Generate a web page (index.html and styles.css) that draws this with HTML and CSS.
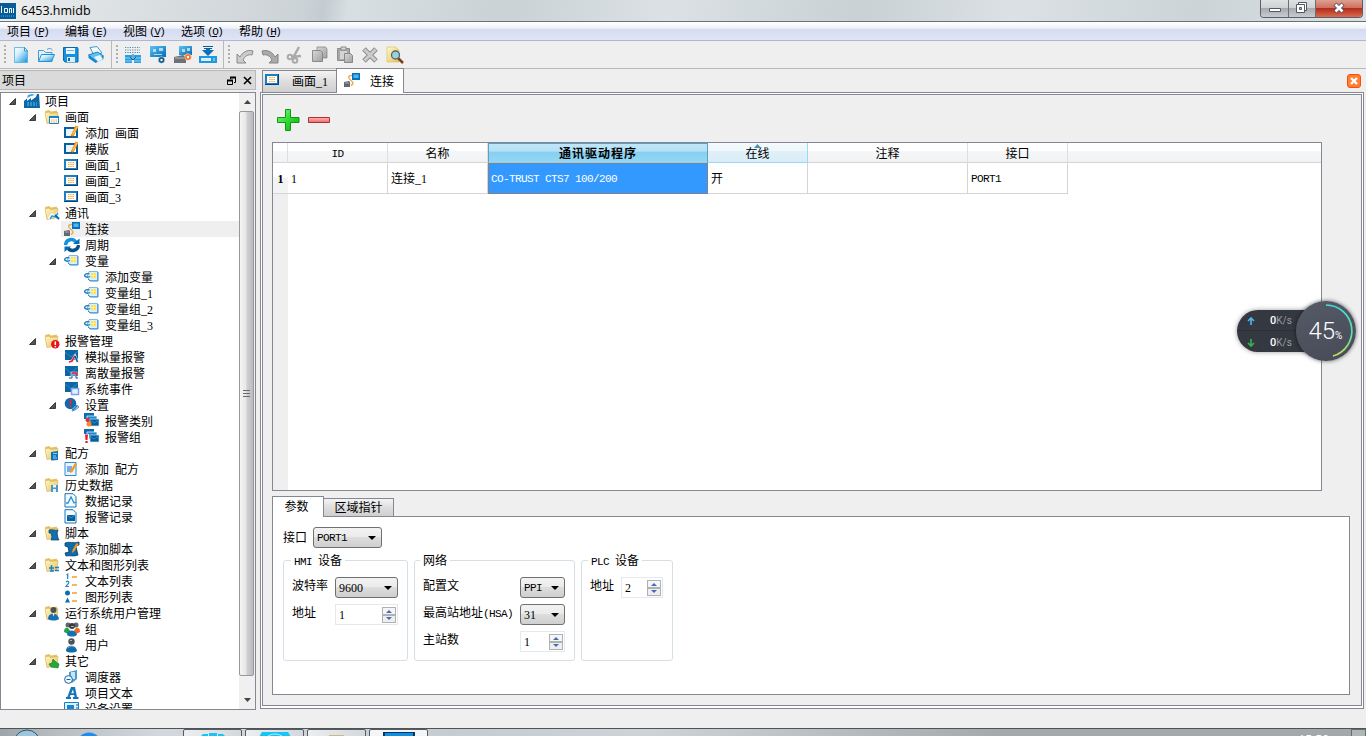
FILE: index.html
```html
<!DOCTYPE html>
<html lang="zh-CN">
<head>
  <meta charset="UTF-8" />
  <meta name="viewport" content="width=device-width, initial-scale=1" />
  <title>6453.hmidb</title>
  <link rel="stylesheet" href="styles.css">
</head>
<body>

  <!-- icon sprite -->
  <svg width="0" height="0" class="sprite">
    <defs>
      <linearGradient id="gBlue" x1="0" y1="0" x2="1" y2="1"><stop offset="0" stop-color="#5cc3f5"/><stop offset="1" stop-color="#0869b0"/></linearGradient>
      <linearGradient id="gPage" x1="0" y1="0" x2="1" y2="1"><stop offset="0" stop-color="#fff"/><stop offset=".35" stop-color="#d5effc"/><stop offset="1" stop-color="#1592dc"/></linearGradient>
      <linearGradient id="gGray" x1="0" y1="0" x2="1" y2="1"><stop offset="0" stop-color="#d8d8d8"/><stop offset="1" stop-color="#a0a0a0"/></linearGradient>
      <linearGradient id="gFold" x1="0" y1="0" x2="1" y2="1"><stop offset="0" stop-color="#fff8c8"/><stop offset="1" stop-color="#e8c158"/></linearGradient>
      <linearGradient id="gGreen" x1="0" y1="0" x2="1" y2="1"><stop offset="0" stop-color="#8cf58c"/><stop offset=".5" stop-color="#2edc2e"/><stop offset="1" stop-color="#00b400"/></linearGradient>
      <linearGradient id="gRed" x1="0" y1="0" x2="0" y2="1"><stop offset="0" stop-color="#ffb4b4"/><stop offset="1" stop-color="#f06a6a"/></linearGradient>
      <linearGradient id="gRing" x1="0" y1="0" x2="0" y2="1"><stop offset="0" stop-color="#3fe0dc"/><stop offset=".6" stop-color="#5fe0a4"/><stop offset="1" stop-color="#c8dc50"/></linearGradient>
    </defs>
    <symbol id="arrow" viewBox="0 0 7 7"><path d="M6.500 .5v6h-6z" fill="#555" stroke="#222" stroke-width=".8"/></symbol>
    <symbol id="factory" viewBox="0 0 16 16"><path d="M0 15V8l3-2.500V8l4-3v2.500L12 4l1-3h2l1 14z" fill="#0b67a5"/><path d="M3 5l1-3 4-1 3 1-4 1z" fill="#3aa3df"/><path d="M3 10h10M3 12h10" stroke="#5ec4f5" stroke-dasharray="2 1"/></symbol>
    <symbol id="folder" viewBox="0 0 16 16"><path d="M1 2l4-1 2 1.500 6-1v11L3 14z" fill="#e9c45e"/><path d="M1 4l4-1 1.500 1.500L14 3.500l-1 9.500-10 1.500z" fill="url(#gFold)" stroke="#c9a548" stroke-width=".5"/></symbol>
    <symbol id="f-screen" viewBox="0 0 16 16"><use href="#folder"/><path d="M5.500 7.500h9v7h-9z" fill="#fff" stroke="#1384cd"/><path d="M5 8h10" stroke="#1384cd" stroke-width="2"/><path d="M7 11h6M7 13h6" stroke="#f5a52e" stroke-dasharray="1.500 .8"/></symbol>
    <symbol id="f-comm" viewBox="0 0 16 16"><use href="#folder"/><path d="M5 14l3-4 3 2 3-4" stroke="#fff" stroke-width="3" fill="none"/><path d="M6 14l2-3 3 1 3-4" stroke="#2c9ee0" stroke-width="1.500" fill="none"/><path d="M11 10l4 4" stroke="#0867a8" stroke-width="2"/></symbol>
    <symbol id="f-alarm" viewBox="0 0 16 16"><use href="#folder"/><circle cx="11.300" cy="11.300" r="4.200" fill="#e8141c"/><path d="M11.300 8.500v3.500M11.300 13v1.200" stroke="#fff" stroke-width="1.500"/></symbol>
    <symbol id="f-recipe" viewBox="0 0 16 16"><use href="#folder"/><path d="M7 7l7-1v9l-7 .5z" fill="#1170b8"/><path d="M9 8.500h4M9 11h3M9 13h4" stroke="#8fd3fb"/></symbol>
    <symbol id="f-history" viewBox="0 0 16 16"><use href="#folder"/><path d="M7 8h7v7H7z" fill="#4e96c9"/><path d="M9 8h3v2.500H9zM9 12h3v3H9z" fill="#e8f4fb"/></symbol>
    <symbol id="f-script" viewBox="0 0 16 16"><use href="#folder"/><path d="M5 5c4-1 6 1 9 0l-1 3 1 5 1 2H7l1-3-1-4H5z" fill="#0f70b3" stroke="#073f6b" stroke-width=".7"/></symbol>
    <symbol id="f-list" viewBox="0 0 16 16"><use href="#folder"/><path d="M5 11h5M7.500 8v6M6 14h4M11 10.500h4M11 13.500h4" stroke="#1380cb" stroke-width="1.400" fill="none"/></symbol>
    <symbol id="f-user" viewBox="0 0 16 16"><use href="#folder"/><circle cx="9.500" cy="5" r="3" fill="#4b5157"/><path d="M4 14c0-7 10-7 11 0-3 2-8 2-11 0z" fill="#1272b3"/><path d="M8.500 8.500l1 3 1-3" fill="#fff"/></symbol>
    <symbol id="f-other" viewBox="0 0 16 16"><use href="#folder"/><path d="M5 11l3-1 1-4 3 3 3 2-1 4-7-1z" fill="#27a63a" stroke="#0c7620" stroke-width=".6"/></symbol>
    <symbol id="edit" viewBox="0 0 16 16"><path d="M1 3h12v9H1z" fill="#fff" stroke="#075f9d" stroke-width="2"/><path d="M2 4h9v7H2z" fill="#e8f4fc"/><path d="M6.500 12.500L7 10l4.500-9.500 3 1L10 10.500z" fill="#f79a1f"/><path d="M9 9l4-7" stroke="#ffcb66"/><path d="M6.500 12.500L7 10.500l1.500 1z" fill="#333"/></symbol>
    <symbol id="screen" viewBox="0 0 16 16"><path d="M1 3h12v9H1z" fill="#fff" stroke="#1b7dc2" stroke-width="2"/><path d="M13.500 2v10.500H0" stroke="#04447c" fill="none"/><path d="M4 5.500h6M4 7.500h6M4 9.500h6" stroke="#f6ae48" stroke-width="1.200" stroke-dasharray="1.600 .6"/></symbol>
    <symbol id="link" viewBox="0 0 16 16"><path d="M8 1h8v7H8z" fill="#0b70bb"/><path d="M9.500 2.500h5v3.500h-5z" fill="#49b8f5"/><path d="M8 3.500C4 3 4 6 6 7.500s5 4 1 6" stroke="#efa954" stroke-width="1.400" fill="none"/><path d="M0 10l5-1 1 1v5H0z" fill="#606970"/><path d="M1 11h4" stroke="#a9b0b5"/></symbol>
    <symbol id="cycle" viewBox="0 0 16 16"><path d="M1.500 8C2 2 9 1 12 5" stroke="#1193de" stroke-width="3.400" fill="none"/><path d="M14.500 8c-.5 6-8 7-10.500 3" stroke="#07508d" stroke-width="3.400" fill="none"/><path d="M9 7h6.500V1.500zM7 9.500H.5V15z" fill="#0a6cb4"/></symbol>
    <symbol id="tag" viewBox="0 0 16 16"><path d="M5 2.500h8.500v9H6L3 8z" fill="#d9effc" stroke="#7dbbe4"/><path d="M14 3v9H6L4 10" stroke="#3f8cc4" fill="none"/><path d="M7 4h5v5H7z" fill="#ffe14a"/><path d="M7 6.500h5M9.500 4v5" stroke="#fff8d0" stroke-width=".6"/><path d="M6 7.500C3 9 0 7.500 .8 6S4 4.500 5.500 5" stroke="#0b72b4" stroke-width="1.300" fill="none"/></symbol>
    <symbol id="alarm-base" viewBox="0 0 16 16"><path d="M1 1h13v10H9v2H7v-2H1z" fill="#0c65a5"/><path d="M1 3l6 5 7-6" stroke="#2f86c0" fill="none"/></symbol>
    <symbol id="alarm-a" viewBox="0 0 16 16"><use href="#alarm-base"/><path d="M5 14l3-2 3-5 2.500 6" stroke="#e3f0f9" stroke-width="2.500" fill="none"/><path d="M5 13l3-1 3-5" stroke="#e82230" stroke-width="1.600" fill="none"/><path d="M11 7l2.500 6" stroke="#07508d" stroke-width="1.500"/></symbol>
    <symbol id="alarm-d" viewBox="0 0 16 16"><use href="#alarm-base"/><path d="M5 13h3V8h4v5h2" stroke="#e3f0f9" stroke-width="2.600" fill="none"/><path d="M5 13h3V8h4v5h2" stroke="#1568a6" fill="none"/><path d="M7.500 8h5v3" stroke="#ea2734" stroke-width="1.500" fill="none"/></symbol>
    <symbol id="alarm-s" viewBox="0 0 16 16"><use href="#alarm-base"/><path d="M7.500 7.500h7v6h-7z" fill="#e6f1ff" stroke="#7f9ff0" stroke-width="1.500"/></symbol>
    <symbol id="alarm-set" viewBox="0 0 16 16"><circle cx="6.500" cy="6.500" r="5.800" fill="#0d6cb0"/><path d="M6.500 2v5M6.500 8v2" stroke="#f02231" stroke-width="2"/><path d="M8 14l1-3 4-3 2 2-4 3z" fill="#cfe5f4" stroke="#5390bb"/><path d="M9 13l4-4" stroke="#2784c2" stroke-width="1.500"/></symbol>
    <symbol id="alarm-stack" viewBox="0 0 16 16"><path d="M0 0h10v6H0z" fill="#0c6cb0"/><path d="M3 3h10v7H3z" fill="#2389ca" stroke="#fff" stroke-width=".7"/><path d="M6 6h9v7H6z" fill="#075c9a" stroke="#cae7f8" stroke-width=".7"/><path d="M6 7l4 3 5-3" stroke="#2f86c0" fill="none"/></symbol>
    <symbol id="alarm-class" viewBox="0 0 16 16"><use href="#alarm-stack"/><circle cx="3.500" cy="7" r="2" fill="#e92733"/><circle cx="5" cy="11" r="2.500" fill="#ff8525"/></symbol>
    <symbol id="alarm-group" viewBox="0 0 16 16"><use href="#alarm-stack"/><path d="M0 5h5v10H0z" fill="#fff"/><path d="M1 5.500h3l-.5 5.500h-2zM1.300 12h2.400v2H1.300z" fill="#ee202d"/></symbol>
    <symbol id="recipe" viewBox="0 0 16 16"><path d="M1 1.500h11v13H1z" fill="#e9f5fd" stroke="#2e8dcc"/><path d="M3 5h5v6H3z" fill="#7fa9e8"/><path d="M6 12l.5-2.500L11 2l2 1-4.500 8z" fill="#f79a1f"/></symbol>
    <symbol id="datalog" viewBox="0 0 16 16"><path d="M1 .7h8l3 3V14H1z" fill="#f2fafe" stroke="#1875b8"/><path d="M2 10h2l3-6 3 6 2-1" stroke="#258ed0" stroke-width="1.300" fill="none"/></symbol>
    <symbol id="alarmlog" viewBox="0 0 16 16"><path d="M1 .7h8l3 3V14H1z" fill="#f2fafe" stroke="#1875b8"/><path d="M3 6h8v6H3z" fill="#0b5e9c"/><path d="M3 6l4 3 4-3" stroke="#3a97cf" fill="none"/></symbol>
    <symbol id="script" viewBox="0 0 16 16"><path d="M1 2c5-2 8 1 14-1v3l-3 1 1 5 1 4c-4 2-8 0-12 1l-1-3 4-1-1-5-3-1z" fill="#0d6cad" stroke="#073b62" stroke-width=".8"/><path d="M8 12l.5-3 4-7 2 1-4 7z" fill="#f79a1f"/></symbol>
    <symbol id="textlist" viewBox="0 0 16 16"><path d="M2.500 2l1.200-.8V6M2 9c2-2 4 0 2 2l-2 2.500h3" stroke="#2385c9" stroke-width="1.200" fill="none"/><path d="M8 4h5M8 12h5" stroke="#f79a2e" stroke-width="1.700"/></symbol>
    <symbol id="graphlist" viewBox="0 0 16 16"><circle cx="3.500" cy="4" r="2.500" fill="#0e6eb2"/><path d="M3.500 8.500L6 13.500H1z" fill="#0e6eb2"/><path d="M8 4h5M8 12h5" stroke="#f79a2e" stroke-width="1.700"/></symbol>
    <symbol id="group" viewBox="0 0 16 16"><path d="M0 11c0-6 5-5 6-1v4z" fill="#25a14b"/><path d="M16 11c0-6-5-5-6-1v4z" fill="#f26a21"/><circle cx="4" cy="4" r="2.500" fill="#60666c"/><circle cx="12" cy="4" r="2.500" fill="#60666c"/><circle cx="8" cy="5" r="3" fill="#383d42"/><path d="M3 14c0-6 9-6 10 0-3 2-7 2-10 0z" fill="#1272b3"/><path d="M7 5.500h3" stroke="#aab0b6"/></symbol>
    <symbol id="user" viewBox="0 0 16 16"><circle cx="7.500" cy="4.500" r="3.200" fill="#4c5258"/><path d="M6 3.500h2" stroke="#aaa"/><path d="M2 14c0-7 10-7 11 0-3 2-8 2-11 0z" fill="#1069a9"/><path d="M4 11c2-2 5-2 6-1" stroke="#5bb4e6" fill="none"/></symbol>
    <symbol id="scheduler" viewBox="0 0 16 16"><path d="M5 3l8-2v9l-5 4-3-3z" fill="#4a9bd0"/><path d="M7 3h4v7H7z" fill="#c6e6f8"/><circle cx="4.500" cy="10.500" r="3.900" fill="#eff9ff" stroke="#1d6396"/><path d="M2.500 10.500h4" stroke="#1d6396" fill="none"/></symbol>
    <symbol id="lettera" viewBox="0 0 16 16"><path d="M7 2h4l2 10h1.500v2H9v-2h1.500l-.4-2H6.500l-.8 2H7v2H2v-2h1.300zM9 4.500L7.300 8.300h2.500z" fill="#1476b9" fill-rule="evenodd"/></symbol>
    <symbol id="device" viewBox="0 0 16 16"><path d="M.5 1.500h14v12H.5z" fill="#e1f3fe" stroke="#1282cb"/><path d="M3 4h7v6H3z" fill="#1488d4"/><path d="M12 4h2M12 7h2" stroke="#0c5f9d"/></symbol>

    <symbol id="t-new" viewBox="0 0 18 18"><path d="M2.500 1.500h10l3 3.500v11.500h-13z" fill="url(#gPage)" stroke="#4aaee6" stroke-width=".8"/><path d="M12.500 1.500V5h3z" fill="#fff" stroke="#1983c8" stroke-width=".8"/></symbol>
    <symbol id="t-open" viewBox="0 0 18 18"><path d="M1.500 15.500v-11h5l2 2h6.500v9z" fill="#dff2fc" stroke="#3f9ed4"/><path d="M1.500 15.500l3-7h13l-3 7z" fill="url(#gPage)" stroke="#248fce"/><path d="M10 3.500c3-2 5-1 5 1" stroke="#3f9ed4" fill="none"/></symbol>
    <symbol id="t-save" viewBox="0 0 18 18"><path d="M1.500 1.500h14l.5 1v13.500H3l-1.500-1.500z" fill="#1792dc" stroke="#0b68a9"/><path d="M4 2h9v6H4z" fill="#eaf7fe"/><path d="M5 11h8v5H5z" fill="#dcedf7"/><path d="M6 12h2v3H6z" fill="#086db2"/><path d="M5 4.500h7" stroke="#70b8e4"/></symbol>
    <symbol id="t-print" viewBox="0 0 18 18"><path d="M3 1.500l7-1L15 7l-8 2z" fill="#f3fbff" stroke="#3b9ad1"/><path d="M1.500 9l9-3 6 4-8 5z" fill="#67bdf0" stroke="#1682c5"/><path d="M1.500 9v3l7 5 8-4v-3l-8 4z" fill="#1389d1"/><path d="M7 11l6-2 3 4-5 3z" fill="#e5f5fd"/></symbol>
    <symbol id="t-compile" viewBox="0 0 18 18"><path d="M1 1.500h15M1 4h15M1 6.500h15" stroke="#4b8aad" stroke-dasharray="1.200 1.200"/><path d="M1 9h7v8H1zM10 9h7v8h-7z" fill="#2a9ee2"/><path d="M1 12h7M10 12h7M1 15h7M10 15h7" stroke="#a8ddf9" stroke-width=".8"/><path d="M9 8v6M6 11l3 3 3-3" stroke="#0b659f" fill="none"/></symbol>
    <symbol id="t-run" viewBox="0 0 18 18"><path d="M1 0h16v11H1z" fill="url(#gBlue)"/><path d="M4 3h3v3H4zM10 2h4v3h-4z" fill="#c9ebfd" opacity=".8"/><path d="M5 8.500h8" stroke="#a5dbf8"/><circle cx="12.500" cy="14" r="3.300" fill="#0a5689" stroke="#dbeaf4" stroke-width=".6"/><circle cx="12.500" cy="14" r="1.200" fill="#fff"/></symbol>
    <symbol id="t-sim" viewBox="0 0 18 18"><path d="M5 0h13v9H5z" fill="url(#gBlue)"/><path d="M8 3h3v3H8zM13 2h3v3h-3z" fill="#c9ebfd" opacity=".8"/><path d="M0 11l9-2 3 2v6H0z" fill="#6c7277"/><path d="M1 12h9" stroke="#b6bbc0"/><circle cx="14" cy="11" r="3.300" fill="#f0722e" stroke="#fbdcc9" stroke-width=".6"/><circle cx="14" cy="11" r="1.200" fill="#fff"/></symbol>
    <symbol id="t-download" viewBox="0 0 18 18"><path d="M0 10h18v7H0z" fill="#2197dc"/><path d="M2 12h10v3H2z" fill="#d6effb"/><path d="M14 12h2v3h-2z" fill="#6cc0ee"/><path d="M4 .5h10M5 2.500h8" stroke="#075f9e"/><path d="M7 2.500h4V4h4L9 10 3 4h4z" fill="#0a6fb5"/></symbol>
    <symbol id="t-undo" viewBox="0 0 18 18"><path d="M1 8v9h9l-3-3c2-4 5-6 9-5l1-4c-6-2-11 2-13 6z" fill="#ccc" stroke="#888"/></symbol>
    <symbol id="t-redo" viewBox="0 0 18 18"><path d="M17 8v9H8l3-3C9 10 6 8 2 9L1 5c6-2 11 2 13 6z" fill="#aaa" stroke="#858585"/></symbol>
    <symbol id="t-cut" viewBox="0 0 18 18"><path d="M13 1L8 10M5 11l10-1" stroke="#aaa" stroke-width="2.500"/><circle cx="4" cy="11" r="2.300" fill="none" stroke="#aaa" stroke-width="2"/><circle cx="9" cy="14.500" r="2.300" fill="none" stroke="#aaa" stroke-width="2"/></symbol>
    <symbol id="t-copy" viewBox="0 0 18 18"><path d="M6 1h8.500l1.500 2v9H6z" fill="url(#gGray)" stroke="#888" stroke-width=".8"/><path d="M1.500 4.500h8l2 2v9h-10z" fill="url(#gGray)" stroke="#777" stroke-width=".8"/></symbol>
    <symbol id="t-paste" viewBox="0 0 18 18"><path d="M1.500 2.500h12v12h-12z" fill="#a7a7a7" stroke="#8c8c8c"/><path d="M4 5h7v8H4z" fill="#d4d4d4"/><path d="M5 1h5v3H5z" fill="#ddd" stroke="#888"/><path d="M8.500 7.500h6l2 2v7h-8z" fill="url(#gGray)" stroke="#888"/></symbol>
    <symbol id="t-delete" viewBox="0 0 18 18"><path d="M3 3l12 12M15 3L3 15" stroke="#8d8d8d" stroke-width="5"/><path d="M3.500 3.500l11 11M14.500 3.500l-11 11" stroke="#ccc" stroke-width="3"/></symbol>
    <symbol id="t-find" viewBox="0 0 18 18"><path d="M1 1h8l4 3v12H1z" fill="url(#gFold)" stroke="#dcba57" stroke-width=".6"/><path d="M12 12l5 5" stroke="#79401f" stroke-width="2.500"/><circle cx="9.500" cy="9" r="4" fill="#9fd1da" stroke="#496a75" stroke-width="1.300"/></symbol>
  </svg>

  <header class="titlebar">
    <svg class="app-icon" width="16" height="16" viewBox="0 0 16 16"><path d="M0 0h16v16H0z" fill="#075b99"/><path d="M1.500 3v7M4.500 5.500h3v4h-3zM9.500 10V5.500h2V10M13.500 5v5" stroke="#fff" fill="none"/><path d="M1 13h14" stroke="#4ab0e8" stroke-dasharray="1 1"/></svg>
    <span class="title">6453.hmidb</span>
    <div class="window-buttons">
      <span class="wbtn min"><svg width="27" height="18"><path d="M8.500 8.500h11v3h-11z" fill="#fff" stroke="#555866"/></svg></span>
      <span class="wbtn max"><svg width="26" height="18"><path d="M9.500 2.500h8v8h-8z" fill="#fff" stroke="#555866"/><path d="M7.500 4.500h8v8h-8z" fill="#fff" stroke="#555866"/><path d="M10.500 7.500h2v2h-2z" fill="#bbb" stroke="#555866"/></svg></span>
      <span class="wbtn close"><svg width="46" height="18"><path d="M19 4l8 8M27 4l-8 8" stroke="#555060" stroke-width="4.500"/><path d="M19.500 4.500l7 7M26.500 4.500l-7 7" stroke="#fff" stroke-width="2.600"/></svg></span>
    </div>
  </header>

  <nav class="menubar">
    <span>项目<i>(<u>P</u>)</i></span>
    <span>编辑<i>(<u>E</u>)</i></span>
    <span>视图<i>(<u>V</u>)</i></span>
    <span>选项<i>(<u>O</u>)</i></span>
    <span>帮助<i>(<u>H</u>)</i></span>
  </nav>

  <div class="toolbar">
    <div class="tool-group">
      <span class="handle"></span>
      <svg><use href="#t-new"/></svg>
      <svg><use href="#t-open"/></svg>
      <svg><use href="#t-save"/></svg>
      <svg><use href="#t-print"/></svg>
    </div>
    <div class="tool-group">
      <span class="handle"></span>
      <svg><use href="#t-compile"/></svg>
      <svg><use href="#t-run"/></svg>
      <svg><use href="#t-sim"/></svg>
      <svg><use href="#t-download"/></svg>
    </div>
    <div class="tool-group">
      <span class="handle"></span>
      <svg><use href="#t-undo"/></svg>
      <svg><use href="#t-redo"/></svg>
      <svg><use href="#t-cut"/></svg>
      <svg><use href="#t-copy"/></svg>
      <svg><use href="#t-paste"/></svg>
      <svg><use href="#t-delete"/></svg>
      <svg><use href="#t-find"/></svg>
    </div>
  </div>

  <div class="workspace">
    <aside class="dock">
      <div class="dock-title">
        <span>项目</span>
        <svg width="30" height="12" viewBox="0 0 30 12"><path d="M5.500 4V2.500h5v5H9" fill="none" stroke="#000"/><path d="M5 2.500h6" stroke="#000" stroke-width="2"/><path d="M2.500 5.500h5v4h-5z" fill="#dadada" stroke="#000"/><path d="M2 5.500h6" stroke="#000" stroke-width="2"/><path d="M19 2l7 7M26 2l-7 7" stroke="#000" stroke-width="1.600"/></svg>
      </div>
      <div class="tree-box">
        <ul class="tree">
          <li><svg class="arr"><use href="#arrow"/></svg><svg class="ico"><use href="#factory"/></svg>项目</li>
          <li class="l1"><svg class="arr"><use href="#arrow"/></svg><svg class="ico"><use href="#f-screen"/></svg>画面</li>
          <li class="l2"><svg class="ico"><use href="#edit"/></svg>添加 画面</li>
          <li class="l2"><svg class="ico"><use href="#edit"/></svg>模版</li>
          <li class="l2"><svg class="ico"><use href="#screen"/></svg>画面_1</li>
          <li class="l2"><svg class="ico"><use href="#screen"/></svg>画面_2</li>
          <li class="l2"><svg class="ico"><use href="#screen"/></svg>画面_3</li>
          <li class="l1"><svg class="arr"><use href="#arrow"/></svg><svg class="ico"><use href="#f-comm"/></svg>通讯</li>
          <li class="l2 selected"><svg class="ico"><use href="#link"/></svg>连接</li>
          <li class="l2"><svg class="ico"><use href="#cycle"/></svg>周期</li>
          <li class="l2"><svg class="arr"><use href="#arrow"/></svg><svg class="ico"><use href="#tag"/></svg>变量</li>
          <li class="l3"><svg class="ico"><use href="#tag"/></svg>添加变量</li>
          <li class="l3"><svg class="ico"><use href="#tag"/></svg>变量组_1</li>
          <li class="l3"><svg class="ico"><use href="#tag"/></svg>变量组_2</li>
          <li class="l3"><svg class="ico"><use href="#tag"/></svg>变量组_3</li>
          <li class="l1"><svg class="arr"><use href="#arrow"/></svg><svg class="ico"><use href="#f-alarm"/></svg>报警管理</li>
          <li class="l2"><svg class="ico"><use href="#alarm-a"/></svg>模拟量报警</li>
          <li class="l2"><svg class="ico"><use href="#alarm-d"/></svg>离散量报警</li>
          <li class="l2"><svg class="ico"><use href="#alarm-s"/></svg>系统事件</li>
          <li class="l2"><svg class="arr"><use href="#arrow"/></svg><svg class="ico"><use href="#alarm-set"/></svg>设置</li>
          <li class="l3"><svg class="ico"><use href="#alarm-class"/></svg>报警类别</li>
          <li class="l3"><svg class="ico"><use href="#alarm-group"/></svg>报警组</li>
          <li class="l1"><svg class="arr"><use href="#arrow"/></svg><svg class="ico"><use href="#f-recipe"/></svg>配方</li>
          <li class="l2"><svg class="ico"><use href="#recipe"/></svg>添加 配方</li>
          <li class="l1"><svg class="arr"><use href="#arrow"/></svg><svg class="ico"><use href="#f-history"/></svg>历史数据</li>
          <li class="l2"><svg class="ico"><use href="#datalog"/></svg>数据记录</li>
          <li class="l2"><svg class="ico"><use href="#alarmlog"/></svg>报警记录</li>
          <li class="l1"><svg class="arr"><use href="#arrow"/></svg><svg class="ico"><use href="#f-script"/></svg>脚本</li>
          <li class="l2"><svg class="ico"><use href="#script"/></svg>添加脚本</li>
          <li class="l1"><svg class="arr"><use href="#arrow"/></svg><svg class="ico"><use href="#f-list"/></svg>文本和图形列表</li>
          <li class="l2"><svg class="ico"><use href="#textlist"/></svg>文本列表</li>
          <li class="l2"><svg class="ico"><use href="#graphlist"/></svg>图形列表</li>
          <li class="l1"><svg class="arr"><use href="#arrow"/></svg><svg class="ico"><use href="#f-user"/></svg>运行系统用户管理</li>
          <li class="l2"><svg class="ico"><use href="#group"/></svg>组</li>
          <li class="l2"><svg class="ico"><use href="#user"/></svg>用户</li>
          <li class="l1"><svg class="arr"><use href="#arrow"/></svg><svg class="ico"><use href="#f-other"/></svg>其它</li>
          <li class="l2"><svg class="ico"><use href="#scheduler"/></svg>调度器</li>
          <li class="l2"><svg class="ico"><use href="#lettera"/></svg>项目文本</li>
          <li class="l2"><svg class="ico"><use href="#device"/></svg>设备设置</li>
        </ul>
        <div class="scrollbar">
          <span class="sb-btn"><svg width="7" height="4"><path d="M0 4l3.500-4L7 4z" fill="#444"/></svg></span>
          <span class="sb-thumb"><svg width="8" height="9"><path d="M0 1.500h7M0 4.500h7M0 7.500h7" stroke="#6a6a6a"/></svg></span>
          <span class="sb-btn"><svg width="7" height="4"><path d="M0 0l3.500 4L7 0z" fill="#444"/></svg></span>
        </div>
      </div>
    </aside>

    <main class="main">
      <div class="doc-tabs">
        <span class="doc-tab"><svg class="ico"><use href="#screen"/></svg><span>画面_1</span></span>
        <span class="doc-tab active"><svg class="ico"><use href="#link"/></svg><span>连接</span></span>
        <svg class="doc-close" width="14" height="14"><rect x=".5" y=".5" width="13" height="13" rx="2.500" fill="#ff8030" stroke="#f8500c"/><path d="M4 4l6 6M10 4l-6 6" stroke="#fff" stroke-width="2.400"/></svg>
      </div>
      <div class="doc-outer">
        <div class="doc">
          <div class="actions">
            <svg width="23" height="23"><path d="M8.500 .5h5v8H22v5h-8.500v8h-5v-8H.5v-5h8z" fill="url(#gGreen)" stroke="#14941b"/></svg>
            <svg width="23" height="23"><path d="M.5 8.500h21v5H.5z" fill="url(#gRed)" stroke="#a93238"/></svg>
          </div>

          <div class="grid-box">
            <table>
              <colgroup><col class="c-head"><col class="c-100"><col class="c-100"><col class="c-driver"><col class="c-100"><col class="c-note"><col class="c-100"><col></colgroup>
              <thead>
                <tr><th></th><th><b class="mono">ID</b></th><th>名称</th><th class="current">通讯驱动程序</th><th class="sorted">在线<svg width="7" height="4"><path d="M0 4l3.500-4L7 4z" fill="#4c8fb5"/></svg></th><th>注释</th><th>接口</th><th></th></tr>
              </thead>
              <tbody>
                <tr><td class="rownum">1</td><td>1</td><td>连接_1</td><td class="cell-selected"><span class="mono">CO-TRUST CTS7 100/200</span></td><td>开</td><td></td><td><span class="mono">PORT1</span></td><td class="blank"></td></tr>
              </tbody>
            </table>
          </div>

          <div class="param-tabs">
            <span class="param-tab active">参数</span>
            <span class="param-tab">区域指针</span>
          </div>
          <div class="params">
            <div class="field port"><label>接口</label><span class="combo mono">PORT1</span></div>
            <div class="groups">
              <section class="group hmi">
                <h3><span class="mono">HMI</span> 设备</h3>
                <div class="field"><label>波特率</label><span class="combo">9600</span></div>
                <div class="field"><label>地址</label><span class="spin">1<i></i></span></div>
              </section>
              <section class="group net">
                <h3>网络</h3>
                <div class="field"><label>配置文</label><span class="combo mono">PPI</span></div>
                <div class="field"><label>最高站地址<span class="mono">(HSA)</span></label><span class="combo">31</span></div>
                <div class="field"><label>主站数</label><span class="spin">1<i></i></span></div>
              </section>
              <section class="group plc">
                <h3><span class="mono">PLC</span> 设备</h3>
                <div class="field"><label>地址</label><span class="spin">2<i></i></span></div>
              </section>
            </div>
          </div>
        </div>
      </div>
    </main>
  </div>

  <footer class="taskbar">
    <svg class="orb" width="28" height="8"><circle cx="14" cy="14" r="13" fill="#9fc5d8" stroke="#2b5878"/></svg>
    <svg class="browser" width="26" height="8"><circle cx="13" cy="16" r="12.500" fill="#1e8cf0"/></svg>
    <div class="tasks">
      <span class="task"><svg width="28" height="5"><path d="M1 5l3-3h5v3M10 5V1h8v4M19 5V2h5l3 3" fill="#16c4f6"/></svg></span>
      <span class="task"><svg width="32" height="5"><path d="M0 5l3-5h26l3 5z" fill="#16c4f6"/><path d="M8 5c4-4 12-4 16 0" stroke="#b9efff" fill="none"/></svg></span>
      <span class="task"><svg width="16" height="5"><path d="M0 3h15v2H0z" fill="#c9b78a"/></svg></span>
      <span class="task on"><svg width="32" height="5"><path d="M0 0h32v5H0z" fill="#06365c"/><path d="M2 1h28v4H2z" fill="#118ee2"/></svg></span>
    </div>
    <span class="clock">15:50</span>
    <span class="show-desktop"></span>
  </footer>

  <!-- floating network monitor -->
  <div class="netmon">
    <div class="speeds">
      <div><svg width="8" height="8"><path d="M4 8V2M1 4l3-3 3 3" stroke="#53b4f5" stroke-width="1.600" fill="none"/></svg><b>0</b>K/s</div>
      <div><svg width="8" height="8"><path d="M4 0v6M1 4l3 3 3-3" stroke="#36b54c" stroke-width="1.600" fill="none"/></svg><b>0</b>K/s</div>
    </div>
    <div class="gauge">
      <svg width="60" height="60"><path d="M30 4A26 26 0 0 1 37 55" fill="none" stroke="url(#gRing)" stroke-width="1.700"/></svg>
      <span>45</span><small>%</small>
    </div>
  </div>

</body>
</html>
```
FILE: styles.css
```css
:root {
  --face: #efefef;
  --line: #858892;
  --soft: #b9b9b9;
}
* {
  box-sizing: border-box;
}
body {
  margin: 0;
  width: 1366px;
  height: 736px;
  overflow: hidden;
  display: flex;
  flex-direction: column;
  position: relative;
  background: var(--face);
  color: #000;
  font-family: "Liberation Serif", "Noto Sans CJK SC", sans-serif;
  font-size: 12px;
  line-height: 16px;
  word-spacing: 3px;
}
svg {
  display: block;
  flex: none;
}
.sprite {
  position: absolute;
}
.mono {
  font-family: "Liberation Mono", "Noto Sans CJK SC", monospace;
  font-size: 11px;
  font-weight: normal;
  letter-spacing: -0.6px;
  word-spacing: 0;
}

/* title bar */
.titlebar {
  height: 22px;
  display: flex;
  border-bottom: 1px solid #6c7073;
  background: linear-gradient(100deg, #eef0f1 0, #dfe3e5 90px, #ccd3d7 300px, #c3ccd1 320px, #d8dfe2 345px, #cad2d6 500px, #dbe1e4 660px, #c9d1d5 850px, #dbe1e4 1000px, #ccd4d8 1180px, #dce2e5 1366px);
}
.app-icon {
  margin-top: 3px;
}
.title {
  padding: 3px 0 0 5px;
  font-family: "Open Sans", sans-serif;
  font-size: 12.5px;
}
.window-buttons {
  display: flex;
  height: 18px;
  margin: 0 3px 0 auto;
  border: 1px solid #5b5f65;
  border-top: 0;
  border-radius: 0 0 4px 4px;
  overflow: hidden;
}
.wbtn {
  background: linear-gradient(#dfe1e3 0, #cfd2d5 45%, #a7abb0 50%, #c8cbce 100%);
  border-right: 1px solid #6c7076;
}
.wbtn.close {
  border-right: 0;
  background: linear-gradient(#dda090 0, #cf7060 45%, #b52d1a 50%, #d86c50 100%);
}

/* menu */
.menubar {
  height: 19px;
  display: flex;
  gap: 16px;
  padding: 2px 0 0 7px;
  border-bottom: 1px solid #b1b6cb;
  background: linear-gradient(#fff 0, #eef1f9 35%, #d6dcf0 40%, #dfe5f6 100%);
}
.menubar span {
  width: 42px;
  display: flex;
}
.menubar i {
  padding-left: 2px;
  font: normal 11px/16px "Liberation Mono", monospace;
  letter-spacing: -1.5px;
}

/* toolbar */
.toolbar {
  height: 28px;
  display: flex;
  border-bottom: 1px solid var(--soft);
}
.tool-group {
  display: flex;
  align-items: center;
  gap: 7px;
  width: 112px;
  border-right: 1px solid var(--soft);
}
.tool-group:last-child {
  width: auto;
  border: 0;
}
.tool-group svg {
  width: 18px;
  height: 18px;
}
.handle {
  width: 2px;
  height: 19px;
  margin: 0 -1px 0 4px;
  background: repeating-linear-gradient(#b0b0b0 0 2px, transparent 2px 4px);
}

/* project dock */
.workspace {
  height: 659px;
  display: flex;
  gap: 4px;
}
.dock {
  width: 256px;
  padding-top: 1px;
}
.dock-title {
  height: 20px;
  display: flex;
  justify-content: space-between;
  align-items: center;
  padding: 1px 0 0 2px;
  border: 1px solid #b9b9b9;
  border-left: 0;
  background: #dadada;
}
.tree-box {
  display: flex;
  height: 618px;
  margin-top: 2px;
  border: 1px solid var(--line);
  background: #fff;
  overflow: hidden;
}
.tree {
  flex: 1;
  margin: 0;
  padding: 0;
  list-style: none;
}
.tree li {
  height: 16px;
  display: flex;
  align-items: flex-start;
  padding-left: 23px;
  line-height: 18px;
  white-space: pre;
}
.tree .l1 {
  padding-left: 43px;
}
.tree .l2 {
  padding-left: 63px;
}
.tree .l3 {
  padding-left: 83px;
}
.tree .selected {
  background: linear-gradient(var(--face), var(--face)) no-repeat 60px 0;
}
.arr {
  width: 7px;
  height: 7px;
  margin: 5px 8px 0 -15px;
}
.ico {
  width: 16px;
  height: 16px;
  margin-right: 5px;
}
.scrollbar {
  width: 16px;
  display: flex;
  flex-direction: column;
  background: #f0f0f0;
}
.sb-btn {
  height: 18px;
  display: flex;
  align-items: center;
  justify-content: center;
}
.sb-thumb {
  height: 565px;
  width: 15px;
  display: flex;
  align-items: center;
  justify-content: center;
  border: 1px solid #989898;
  border-radius: 2px;
  background: linear-gradient(90deg, #f5f5f5 0, #e7e7e9 45%, #cfcfd2 55%, #bcbcc0 100%);
}
.sb-btn:last-child {
  margin-top: auto;
}

/* document area */
.main {
  width: 1104px;
}
.doc-tabs {
  height: 23px;
  display: flex;
  align-items: flex-end;
  padding-left: 2px;
}
.doc-tab {
  height: 22px;
  width: 74px;
  display: flex;
  align-items: center;
  padding-left: 2px;
  border: 1px solid var(--line);
  border-right: 0;
  border-bottom: 0;
  background: linear-gradient(#f3f3f3, #dedede 50%, #cfcfcf);
}
.doc-tab span {
  padding-top: 1px;
}
.doc-tab .ico {
  margin: -3px 11px 0 0;
}
.doc-tab.active {
  height: 25px;
  width: 68px;
  margin-bottom: -1px;
  position: relative;
  padding-left: 7px;
  border-right: 1px solid var(--line);
  background: #fff;
}
.doc-tab.active .ico {
  margin-right: 10px;
}
.doc-close {
  margin: 0 3px 4px auto;
}
.doc-outer {
  height: 617px;
  padding: 1px 1px 2px 1px;
  border: 1px solid var(--line);
  background: #fff;
}
.doc {
  height: 612px;
  padding: 14px 11px 0 9px;
  border: 1px solid var(--line);
  background: var(--face);
}
.actions {
  height: 33px;
  display: flex;
  gap: 8px;
  padding-left: 5px;
}
.grid-box {
  width: 1050px;
  height: 349px;
  border: 1px solid var(--line);
  background: linear-gradient(90deg, var(--face) 15px, #fff 15px);
}
table {
  width: 1048px;
  table-layout: fixed;
  border-spacing: 0;
}
.c-head {
  width: 15px;
}
.c-100 {
  width: 100px;
}
.c-driver {
  width: 220px;
}
.c-note {
  width: 160px;
}
th {
  height: 20px;
  padding: 2px 0 0;
  font-weight: normal;
  position: relative;
  border-right: 1px solid #dedfe1;
  border-bottom: 1px solid #d5d5d5;
  background: linear-gradient(#fff 0, #fff 40%, #f5f6f8 45%, #f0f2f4 100%);
}
th:last-child {
  border-right: 0;
}
th.current {
  padding-top: 1px;
  font-weight: bold;
  letter-spacing: 1px;
  border: 1px solid #5b9fc2;
  border-bottom-color: #8fd0ef;
  background: linear-gradient(#bfe6f9 0, #b3e0f6 40%, #87cff0 45%, #93d7f5 100%);
}
th.sorted {
  border-right-color: #96d9f9;
  border-bottom-color: #96d9f9;
  background: linear-gradient(#f4fafd 0, #eef7fc 40%, #e0f0f8 45%, #d9ecf6 100%);
}
/* sort marker sits over the header label */
th.sorted svg {
  position: absolute;
  top: 1px;
  left: 46px;
}
td {
  height: 31px;
  padding: 1px 0 0 3px;
  border-right: 1px solid #d5d5d5;
  border-bottom: 1px solid #d5d5d5;
  background: #fff;
}
td.rownum {
  padding: 2px 0 0;
  text-align: center;
  font-weight: bold;
  border-right: 0;
  background: linear-gradient(#fff 0, #fff 45%, #f2f3f5 50%);
}
td.cell-selected {
  padding: 0 0 0 2px;
  color: #fff;
  border: 1px dotted #c96a20;
  background: #3399ff;
}
td.blank {
  border: 0;
}

/* parameters */
.param-tabs {
  height: 26px;
  display: flex;
  align-items: flex-end;
}
.param-tab {
  height: 19px;
  width: 70px;
  padding-top: 1px;
  border: 1px solid var(--line);
  border-left: 0;
  text-align: center;
  background: linear-gradient(#f3f3f3, #dedede 50%, #cfcfcf);
}
.param-tab.active {
  height: 21px;
  width: 52px;
  padding-right: 3px;
  padding-top: 2px;
  border-left: 1px solid var(--line);
  border-bottom: 0;
  background: #fff;
}
.params {
  width: 1078px;
  height: 179px;
  padding: 11px 0 0 10px;
  border: 1px solid var(--line);
  border-top: 0;
  background: linear-gradient(var(--line), var(--line)) no-repeat 51px 0 / 100% 1px #fff;
  margin-top: -1px;
}
.field {
  display: flex;
  height: 22px;
  margin-bottom: 5px;
}
.field label {
  padding-top: 1px;
}
.port label {
  padding-top: 3px;
  width: 30px;
}
.port .combo {
  width: 69px;
}
.combo {
  display: flex;
  justify-content: space-between;
  align-items: center;
  height: 21px;
  padding: 0 5px 0 3px;
  border: 1px solid #707070;
  border-radius: 3px;
  background: linear-gradient(#f2f2f2 0, #ebebeb 48%, #dddddd 50%, #cfcfcf 100%);
}
.combo::after {
  content: "";
  border: 4px solid transparent;
  border-top-color: #000;
  border-bottom: 0;
}
.spin {
  display: flex;
  justify-content: space-between;
  align-items: center;
  height: 21px;
  padding: 0 1px 0 3px;
  border: 1px solid #e3e9ef;
  background: #fff;
}
.spin i {
  width: 14px;
  height: 16px;
  display: flex;
  flex-direction: column;
  align-items: center;
  justify-content: space-around;
  border: 1px solid #adb2b5;
  background: linear-gradient(#f5f5f5 0 6px, #adb2b5 6px 8px, #eee 8px);
}
.spin i::before,
.spin i::after {
  content: "";
  border: 3px solid transparent;
  border-bottom-color: #4c66b8;
  border-top: 0;
}
.spin i::after {
  border-top: 3px solid #4c66b8;
  border-bottom: 0;
}
.groups {
  display: flex;
  gap: 6px;
  margin-top: 11px;
}
.group {
  height: 101px;
  border: 1px solid #d5dfe5;
  border-radius: 3px;
}
.group h3 {
  width: fit-content;
  height: 16px;
  margin: -9px 0 9px 7px;
  padding: 1px 3px 0;
  font-size: 12px;
  font-weight: normal;
  background: #fff;
}
.group .field {
  padding-left: 8px;
}
.hmi {
  width: 125px;
}
.hmi label {
  width: 43px;
}
.hmi .combo,
.hmi .spin {
  width: 63px;
}
.net {
  width: 161px;
}
.net h3 {
  margin-left: 5px;
}
.net label {
  width: 97px;
}
.net .combo,
.net .spin {
  width: 45px;
}
.plc {
  width: 92px;
}
.plc h3 {
  margin-left: 6px;
}
.plc label {
  width: 31px;
}
.plc .spin {
  width: 42px;
}

/* taskbar */
.taskbar {
  height: 8px;
  display: flex;
  overflow: hidden;
  border-top: 1px solid #4d5357;
  background: linear-gradient(90deg, #9ea5aa 0, #b8bec2 60px, #d2d8dd 160px, #c5ccd2 450px, #cdd3d7 650px, #a4a9ac 1000px, #a3a8ab 1366px);
}
.orb {
  margin-left: 13px;
}
.browser {
  margin: 0 0 0 35px;
}
.tasks {
  display: flex;
  gap: 3px;
  margin-left: 81px;
}
.task {
  width: 59px;
  height: 12px;
  display: flex;
  justify-content: center;
  padding-top: 2px;
  border: 1px solid #555b60;
  border-radius: 2px;
  background: linear-gradient(90deg, #eceef0, #d3d8dc);
}
.task.on {
  background: #f3f5f7;
}
.clock {
  margin: 4px 22px 0 auto;
  color: #fff;
  font-family: "Open Sans", sans-serif;
  font-size: 12px;
  line-height: 14px;
}
.show-desktop {
  width: 15px;
  height: 12px;
  border: 1px solid #666b6e;
  background: #b0b5b8;
}

/* floating monitor */
.netmon {
  position: absolute;
  left: 1237px;
  top: 301px;
  width: 119px;
  height: 60px;
  display: flex;
  align-items: center;
  word-spacing: 0;
  font-family: Roboto, sans-serif;
}
.speeds {
  width: 80px;
  height: 42px;
  margin-right: -20px;
  border-radius: 21px 0 0 21px;
  background: #343841;
  box-shadow: 0 0 5px rgba(0, 0, 0, 0.4);
  color: #9a9da5;
  font-size: 10px;
}
.speeds div {
  height: 21px;
  display: flex;
  align-items: center;
  padding: 2px 0 0 10px;
}
.speeds div:first-child {
  border-bottom: 1px solid #2c3038;
}
.speeds b {
  margin-left: 15px;
  color: #fff;
  font-size: 11px;
  font-weight: 500;
}
.gauge {
  width: 60px;
  height: 60px;
  display: flex;
  align-items: center;
  padding-left: 12px;
  position: relative;
  border-radius: 50%;
  background: linear-gradient(160deg, #555a67, #474b57);
  box-shadow: 0 0 4px rgba(0, 0, 0, 0.6);
  color: #fff;
  font-weight: 300;
  font-size: 24px;
}
.gauge svg {
  position: absolute;
  left: 0;
  top: 0;
}
.gauge small {
  padding-top: 9px;
  font-size: 10px;
  font-weight: 400;
}
```
